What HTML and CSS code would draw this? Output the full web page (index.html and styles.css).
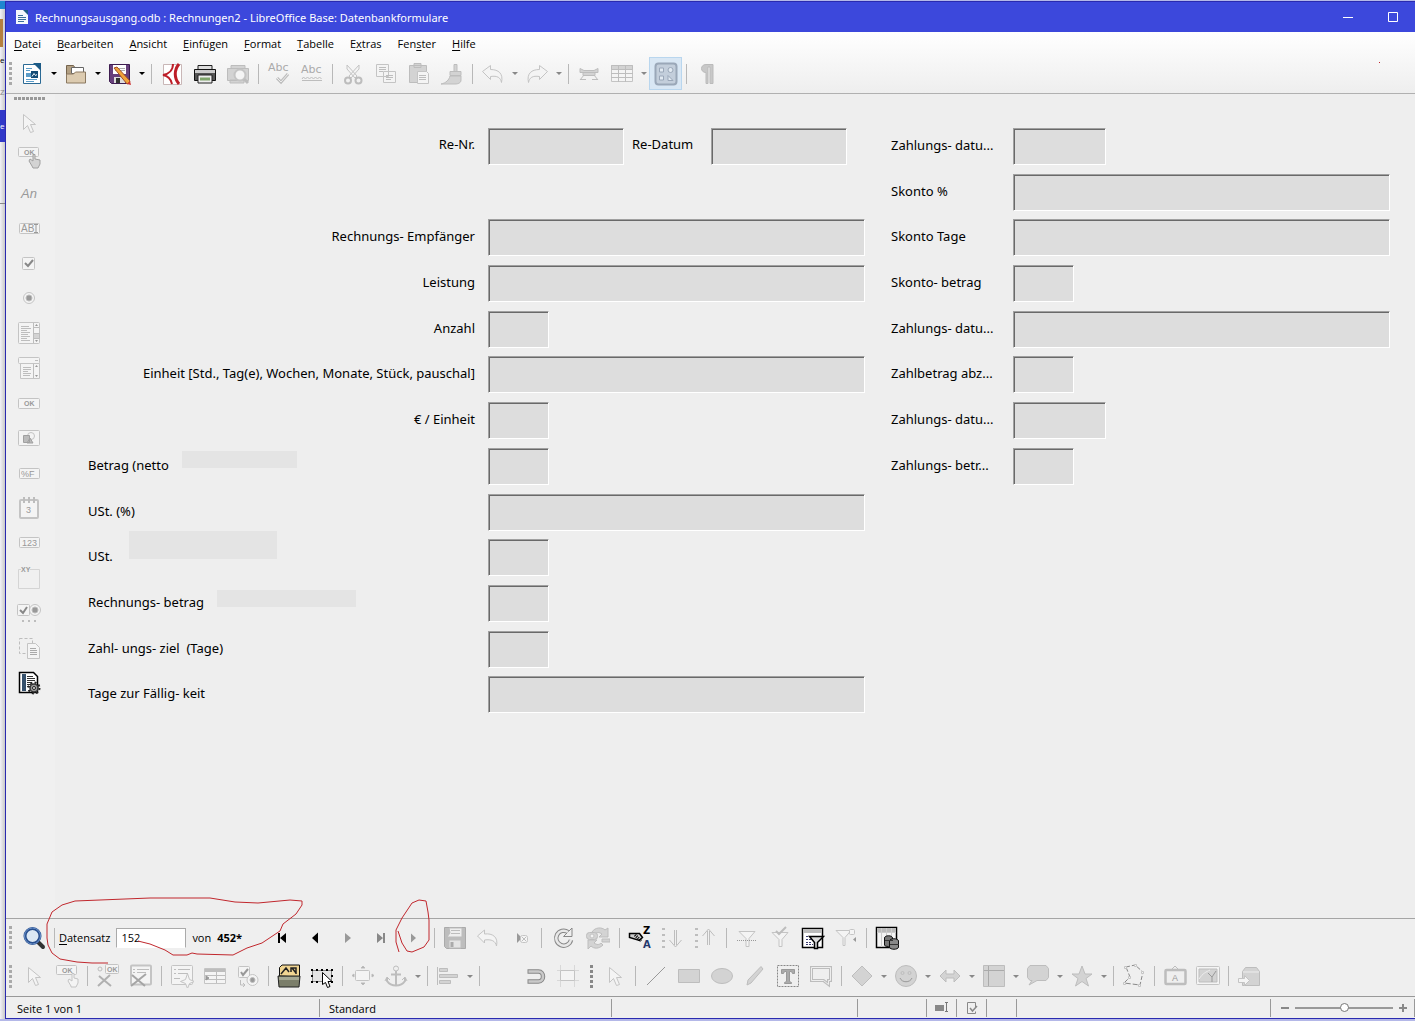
FILE: index.html
```html
<!DOCTYPE html>
<html lang="de">
<head>
  <meta charset="utf-8" />
  <meta name="viewport" content="width=device-width, initial-scale=1" />
  <title>Rechnungsausgang.odb : Rechnungen2 - LibreOffice Base: Datenbankformulare</title>
  <link rel="stylesheet" href="styles.css">
</head>
<body>
  <div class="behind" aria-hidden="true">
    <div class="b-tab"></div>
    <div class="b-folder"></div>
    <div class="b-text">e</div>
    <div class="b-text b-grey">Z</div>
    <div class="b-sel">e</div>
    <div class="b-line"></div>
  </div>

  <div class="window">
    <header class="titlebar">
      <svg class="app-icon" viewBox="0 0 14 16"><path d="M1 1h8l4 4v10H1z" fill="#f4f8fc"/><path d="M8 1h5v5z" fill="#1c5a86"/><path d="M3 6.500h5M3 8.500h8M3 10.500h8M3 12.500h6" stroke="#3b6f9b"/></svg>
      <h1>Rechnungsausgang.odb : Rechnungen2 - LibreOffice Base: Datenbankformulare</h1>
      <button class="win-btn" aria-label="Minimieren"><svg viewBox="0 0 12 12"><path d="M1 6.500h10" stroke="#fff"/></svg></button>
      <button class="win-btn" aria-label="Maximieren"><svg viewBox="0 0 12 12"><path d="M1.500 1.500h9v9h-9z" fill="none" stroke="#fff"/></svg></button>
    </header>

    <div class="top">
      <nav class="menubar">
        <button><u>D</u>atei</button>
        <button><u>B</u>earbeiten</button>
        <button><u>A</u>nsicht</button>
        <button><u>E</u>infügen</button>
        <button><u>F</u>ormat</button>
        <button><u>T</u>abelle</button>
        <button>E<u>x</u>tras</button>
        <button>Fen<u>s</u>ter</button>
        <button><u>H</u>ilfe</button>
      </nav>

      <div class="toolbar standard">
        <span class="grip"></span>
        <button class="tb" aria-label="Neu"><svg viewBox="0 0 24 24"><path d="M3.500 2.500h12l5 5v14h-17z" fill="#fff" stroke="#2b6a95"/><path d="M13 1h8v8z" fill="#1d5b86"/><path d="M6 6.500h6M6 8.500h4M6 17.500h11M6 19.500h8" stroke="#5b9cc8"/><path d="M6 11h5v4H6z" fill="#5b9cc8"/><path d="M11 9h7v7h-7z" fill="#144b74"/><path d="M12 14.500l2-3 1.500 2 1.500-1" stroke="#fff" fill="none"/></svg></button>
        <button class="drop" aria-label="Neu Auswahl"></button>
        <button class="tb" aria-label="Öffnen"><svg viewBox="0 0 24 24"><path d="M2.500 19.500v-16h7l2 3h8v13z" fill="#b3a083" stroke="#75644d"/><path d="M7.500 5.500h12v6h-12z" fill="#fff" stroke="#666"/><path d="M2.500 21v-9h7l2-2h10v11z" fill="#dccbb0" stroke="#8b7961"/></svg></button>
        <button class="drop" aria-label="Öffnen Auswahl"></button>
        <button class="tb" aria-label="Speichern"><svg viewBox="0 0 24 24"><path d="M1.500 2.500h20v19h-18l-2-2z" fill="#67407c" stroke="#3e1d50"/><path d="M5 3h13v9H5z" fill="#fff"/><path d="M7 6.500h10M7 8.500h10" stroke="#aaa"/><path d="M6 15h11v6H6z" fill="#ddd"/><path d="M8 16h4v5H8z" fill="#333"/><path d="M6 6l3-1 13 14-1 2-2 1z" fill="#f0a339" stroke="#a3502a"/><path d="M19 22l4 1-1-4z" fill="#c33"/></svg></button>
        <button class="drop" aria-label="Speichern Auswahl"></button>
        <span class="sep"></span>
        <button class="tb" aria-label="Als PDF exportieren"><svg viewBox="0 0 24 24"><path d="M3.500 2.500h18v20h-18z" fill="#fff" stroke="#c9b7b7"/><path d="M19 2c-5 6-5 14 0 20" stroke="#bd1e28" stroke-width="3" fill="none"/><path d="M13 2c0 6-4 10-10 11 5 1 8 4 9 9" stroke="#bd1e28" stroke-width="2" fill="none"/></svg></button>
        <button class="tb" aria-label="Drucken"><svg viewBox="0 0 24 24"><path d="M5 3.500h14v5H5z" fill="#ddd" stroke="#222"/><path d="M1.500 7.500h21v11h-21z" fill="#555" stroke="#111"/><path d="M2 8h20v3H2z" fill="#ccc"/><path d="M5 13h14v8H5z" fill="#eee" stroke="#222"/><path d="M7 17h10" stroke="#7fa56b" stroke-width="3"/></svg></button>
        <button class="tb" aria-label="Druckvorschau" disabled><svg class="off" viewBox="0 0 24 24"><path class="f" d="M1.500 6.500h21v12h-21zM5 3.500h14v3H5zM4 18h14v3H4z"/><circle class="l" cx="14" cy="13" r="5.500" stroke-width="2"/><path d="M18 17l4 4" stroke-width="3"/></svg></button>
        <span class="sep"></span>
        <button class="tb" aria-label="Rechtschreibung" disabled><svg class="off" viewBox="0 0 24 24"><text x="1" y="9" class="abc">Abc</text><path d="M10 16l4 4 7-8" stroke-width="3"/><path d="M10 16l4 4 7-8" stroke="#eee"/></svg></button>
        <button class="tb" aria-label="Automatische Rechtschreibung" disabled><svg class="off" viewBox="0 0 24 24"><text x="1" y="11" class="abc">Abc</text><path d="M2 17l1.500-2 2 2 2-2 2 2 2-2 2 2 2-2 2 2 2-2 2 2"/><path d="M2 18.500h20"/></svg></button>
        <span class="sep"></span>
        <button class="tb" aria-label="Ausschneiden" disabled><svg class="off" viewBox="0 0 24 24"><path class="l" d="M6 3v4l8 9 2-2zM18 3v4l-8 9-2-2z"/><circle cx="7" cy="18.500" r="3" stroke-width="2"/><circle cx="17.500" cy="18.500" r="3" stroke-width="2"/></svg></button>
        <button class="tb" aria-label="Kopieren" disabled><svg class="off" viewBox="0 0 24 24"><path class="l" d="M2.500 2.500h12v12h-12zM9.500 9.500h12v11h-12z"/><path d="M5 5.500h7M5 7.500h7M5 9.500h4M12 13.500h7M12 15.500h7M12 17.500h5"/></svg></button>
        <button class="tb" aria-label="Einfügen" disabled><svg class="off" viewBox="0 0 24 24"><path class="f" d="M2.500 3.500h17v17h-17zM7 1.500h7v4H7z"/><path class="l" d="M10.500 9.500h9l2 2v10h-11z"/><path d="M12 13.500h7M12 15.500h7M12 17.500h7"/></svg></button>
        <button class="tb" aria-label="Format übertragen" disabled><svg class="off" viewBox="0 0 24 24"><path class="f" d="M14 2.500h3v7h-3zM10 9.500h11v4H10zM10 14h11v4c0 3-3 4-6 4H1c5-1 8-4 9-8z"/></svg></button>
        <span class="sep"></span>
        <button class="tb" aria-label="Rückgängig" disabled><svg class="off" viewBox="0 0 24 24"><path class="l" d="M1.500 9.500l8-6v4c8 0 13 4 11 13-1-5-4-7-11-6v3z"/></svg></button>
        <button class="drop" aria-label="Rückgängig Auswahl" disabled></button>
        <button class="tb" aria-label="Wiederherstellen" disabled><svg class="off" viewBox="0 0 24 24"><path class="l" d="M22.500 9.500l-8-6v4c-8 0-13 4-11 13 1-5 4-7 11-6v3z" stroke="#b8b8b8"/></svg></button>
        <button class="drop" aria-label="Wiederherstellen Auswahl" disabled></button>
        <span class="sep"></span>
        <button class="tb" aria-label="Suchen" disabled><svg class="off" viewBox="0 0 24 24"><path class="f" d="M3 6.500l4 2h10l4-2v4H3zM6 10.500h12v3H6z"/><path d="M7 13l-4 5M17 13l4 5M3 17.500h6M15 17.500h6"/></svg></button>
        <button class="tb" aria-label="Tabelle" disabled><svg class="off" viewBox="0 0 24 24"><path class="l" d="M1.500 3.500h21v16h-21z"/><path class="f" d="M1.500 3.500h21v4h-21z"/><path d="M1 11.500h22M1 15.500h22M8.500 4v16M15.500 4v16"/></svg></button>
        <button class="drop" aria-label="Tabelle Auswahl" disabled></button>
        <button class="tb active" aria-label="Zeichenfunktionen"><svg viewBox="0 0 24 24" fill="none" stroke="#9aa7b8"><rect x="1.500" y="1.500" width="21" height="21" rx="3" fill="#c3cedb" stroke-width="2"/><path d="M5.500 6h4v4h-4zM5.500 14h4v4h-4zM14 13.500v5h5z" fill="#e1e9f1"/><circle cx="16.500" cy="8" r="2.500" fill="#e1e9f1"/></svg></button>
        <span class="sep"></span>
        <button class="tb" aria-label="Formatierungszeichen" disabled><svg class="off" viewBox="0 0 24 24"><path d="M18 2.500h-7c-6 0-6 8 0 8v11h2V5h2v16.500h3z" fill="#c8c8c8" stroke="#bbb"/></svg></button>
      </div>
      <span class="dot"></span>
    </div>

    <main class="work">
      <aside class="sidebar">
        <span class="grip-h"></span>
        <button class="sb" aria-label="Auswahl" disabled><svg class="off" viewBox="0 0 24 24"><path class="l" d="M6.500 3.500v15l4-4 3 7 3-1-3-7h5z"/></svg></button>
        <button class="sb" aria-label="Schaltfläche mit Zeiger" disabled><svg class="off" viewBox="0 0 24 24"><rect class="l" x="1.500" y="1.500" width="20" height="9" rx="1"/><text x="7" y="9" class="t7">OK</text><path class="f" d="M15 20l-3-5 1-2 3 2V8.500h2V13l5 1v4l-2 4h-5z" stroke="#a0a0a0"/></svg></button>
        <button class="sb" aria-label="Beschriftungsfeld" disabled><svg class="off" viewBox="0 0 24 24"><text x="4" y="17" class="t13 it">An</text></svg></button>
        <button class="sb" aria-label="Textfeld" disabled><svg class="off" viewBox="0 0 24 24"><rect class="l" x="2.500" y="7.500" width="20" height="10" rx="1"/><text x="4" y="16" class="t10">AB</text><path d="M17 8.500h4M19 9v8M17 16.500h4" stroke="#999"/></svg></button>
        <button class="sb" aria-label="Markierfeld" disabled><svg class="off" viewBox="0 0 24 24"><rect class="l" x="5.500" y="6.500" width="12" height="12" rx="1"/><path d="M8 12l3 3 5-6" stroke="#888" stroke-width="2"/></svg></button>
        <button class="sb" aria-label="Optionsfeld" disabled><svg class="off" viewBox="0 0 24 24"><circle class="l" cx="12" cy="12" r="5.500"/><circle cx="12" cy="12" r="3" fill="#999"/></svg></button>
        <button class="sb" aria-label="Listenfeld" disabled><svg class="off" viewBox="0 0 24 24"><rect class="l" x="1.500" y="1.500" width="21" height="21" rx="1"/><path class="f" d="M16.500 12.500h6v5h-6z"/><path d="M16.500 2v20M17 6.500h5M4 5.500h8M4 7.500h10M4 9.500h6M4 11.500h9M4 13.500h7M4 15.500h9M4 17.500h6M4 19.500h9"/><path d="M18 5l1.500-2L21 5zM18 19l1.500 2 1.500-2z" fill="#999" stroke="none"/></svg></button>
        <button class="sb" aria-label="Kombinationsfeld" disabled><svg class="off" viewBox="0 0 24 24"><rect class="l" x="1.500" y="1.500" width="21" height="6" rx="1"/><path class="l" d="M3.500 7.500h19v15h-19z"/><path d="M16.500 8v14M6 11.500h8M6 13.500h8M6 15.500h5M6 17.500h8M6 19.500h7M18 4.500h3"/><path d="M18 11l1.500-2 1.500 2zM18 19l1.500 2 1.500-2z" fill="#999" stroke="none"/></svg></button>
        <button class="sb" aria-label="Schaltfläche" disabled><svg class="off" viewBox="0 0 24 24"><rect class="l" x="1.500" y="7.500" width="21" height="10" rx="1"/><text x="7" y="15" class="t7">OK</text></svg></button>
        <button class="sb" aria-label="Grafische Schaltfläche" disabled><svg class="off" viewBox="0 0 24 24"><rect class="l" x="1.500" y="4.500" width="21" height="15" rx="1"/><circle class="l" cx="14" cy="10" r="3.500" stroke="#a0a0a0"/><path d="M6.500 9.500h6v7h-6zM10 17l3-5 3 5z" fill="#bbb" stroke="#a0a0a0"/></svg></button>
        <button class="sb" aria-label="Formatiertes Feld" disabled><svg class="off" viewBox="0 0 24 24"><rect class="l" x="2.500" y="7.500" width="20" height="10" rx="1"/><text x="4" y="16" class="t9">%F</text></svg></button>
        <button class="sb" aria-label="Datumsfeld" disabled><svg class="off" viewBox="0 0 24 24"><rect class="l" x="3" y="4" width="18" height="18" rx="1" stroke-width="2"/><path d="M7 1v6M12 1v6M17 1v6" stroke-width="2"/><text x="9" y="17" class="t9">3</text></svg></button>
        <button class="sb" aria-label="Numerisches Feld" disabled><svg class="off" viewBox="0 0 24 24"><rect class="l" x="2.500" y="6.500" width="20" height="10" rx="1"/><text x="5" y="15" class="t9">123</text></svg></button>
        <button class="sb" aria-label="Gruppierungsrahmen" disabled><svg class="off" viewBox="0 0 24 24"><path d="M4 3.500H1.500v19h21v-19H13" stroke="#d4d4d4"/><text x="4" y="6" class="t7">XY</text></svg></button>
        <button class="sb" aria-label="Weitere Steuerelemente" disabled><svg class="off" viewBox="0 0 24 24"><rect class="l" x="0.500" y="3.500" width="12" height="11" rx="1"/><path d="M3 9l3 3 4-6" stroke="#888" stroke-width="2"/><circle class="l" cx="18" cy="9" r="5.500"/><circle cx="18" cy="9" r="3" fill="#999"/><path d="M5 20h2M11 20h2M17 20h2" stroke-width="2"/></svg></button>
        <button class="sb" aria-label="Formular-Entwurf" disabled><svg class="off" viewBox="0 0 24 24"><path d="M2.500 2.500h13v15h-13z" stroke-dasharray="3 2"/><path class="l" d="M10.500 7.500h8l4 4v11h-12z" stroke="#aaa"/><path d="M13 12.500h6M13 14.500h7M13 16.500h7M13 18.500h7" stroke="#aaa"/></svg></button>
        <button class="sb" aria-label="Assistenten"><svg viewBox="0 0 24 24"><path d="M2.500 1.500h14l4 4v16h-18z" fill="#fff" stroke="#000" stroke-width="1.500"/><path d="M7 3v17" stroke="#35506b" stroke-width="4"/><path d="M10 5.500h6M10 7.500h8M10 9.500h8M10 11.500h5M10 13.500h4M10 15.500h3" stroke="#333"/><circle cx="17" cy="17" r="5.500" fill="none" stroke="#222" stroke-width="2" stroke-dasharray="2 2.300"/><circle cx="17" cy="17" r="4" fill="#999" stroke="#333" stroke-width="1.500"/><circle cx="17" cy="17" r="1.500" fill="#eee" stroke="#222"/></svg></button>
      </aside>

      <form class="form">
        <div class="col left">
          <div class="row head">
            <label class="lab r" for="renr">Re-Nr.</label><input class="fld md" id="renr" disabled>
            <label class="mid" for="redatum">Re-Datum</label><input class="fld md" id="redatum" disabled>
          </div>
          <div class="row"></div>
          <div class="row"><label class="lab r" for="empf">Rechnungs- Empfänger</label><input class="fld" id="empf" disabled></div>
          <div class="row"><label class="lab r" for="leist">Leistung</label><input class="fld" id="leist" disabled></div>
          <div class="row"><label class="lab r" for="anz">Anzahl</label><input class="fld xs" id="anz" disabled></div>
          <div class="row"><label class="lab r" for="einh">Einheit [Std., Tag(e), Wochen, Monate, Stück, pauschal]</label><input class="fld" id="einh" disabled></div>
          <div class="row"><label class="lab r" for="proe">€ / Einheit</label><input class="fld xs" id="proe" disabled></div>
          <div class="row"><label class="lab" for="netto">Betrag (netto <span class="patch p1"></span></label><input class="fld xs" id="netto" disabled></div>
          <div class="row"><label class="lab" for="ustp">USt. (%)</label><input class="fld" id="ustp" disabled></div>
          <div class="row"><label class="lab" for="ust">USt. <span class="patch p2"></span></label><input class="fld xs" id="ust" disabled></div>
          <div class="row"><label class="lab" for="rebetrag">Rechnungs- betrag <span class="patch p3"></span></label><input class="fld xs" id="rebetrag" disabled></div>
          <div class="row"><label class="lab" for="ziel">Zahl- ungs- ziel&nbsp; (Tage)</label><input class="fld xs" id="ziel" disabled></div>
          <div class="row"><label class="lab" for="faellig">Tage zur Fällig- keit</label><input class="fld" id="faellig" disabled></div>
        </div>
        <div class="col right">
          <div class="row"><label class="lab" for="zd1">Zahlungs- datu...</label><input class="fld sm" id="zd1" disabled></div>
          <div class="row"><label class="lab" for="skp">Skonto %</label><input class="fld" id="skp" disabled></div>
          <div class="row"><label class="lab" for="skt">Skonto Tage</label><input class="fld" id="skt" disabled></div>
          <div class="row"><label class="lab" for="skb">Skonto- betrag</label><input class="fld xs" id="skb" disabled></div>
          <div class="row"><label class="lab" for="zd2">Zahlungs- datu...</label><input class="fld" id="zd2" disabled></div>
          <div class="row"><label class="lab" for="zabz">Zahlbetrag abz...</label><input class="fld xs" id="zabz" disabled></div>
          <div class="row"><label class="lab" for="zd3">Zahlungs- datu...</label><input class="fld sm" id="zd3" disabled></div>
          <div class="row"><label class="lab" for="zb">Zahlungs- betr...</label><input class="fld xs" id="zb" disabled></div>
        </div>
      </form>
    </main>

    <div class="bottom">
      <div class="toolbar nav">
        <span class="grip"></span>
        <div class="record">
          <button class="tb" aria-label="Datensatz suchen"><svg viewBox="0 0 24 24"><path d="M16 16l5 5" stroke="#333" stroke-width="4" stroke-linecap="round"/><circle cx="10.500" cy="10" r="7.500" fill="#dbe7f3" stroke="#284f8f" stroke-width="3"/><circle cx="10.500" cy="10" r="8" fill="none" stroke="#6d93c9"/></svg></button>
          <span class="sep"></span>
          <label for="rec"><u>D</u>atensatz</label>
          <input id="rec" class="rec" value="152">
          <span class="von">von</span>
          <b>452*</b>
        </div>
        <button class="tb" aria-label="Erster Datensatz"><svg viewBox="0 0 24 24"><path d="M8 7h2v10H8zM16 7v10l-6-5z"/></svg></button>
        <button class="tb" aria-label="Vorheriger Datensatz"><svg viewBox="0 0 24 24"><path d="M15 6.500v11L9 12z"/></svg></button>
        <button class="tb" aria-label="Nächster Datensatz" disabled><svg viewBox="0 0 24 24" fill="#999"><path d="M9 7v10l6-5z"/></svg></button>
        <button class="tb" aria-label="Letzter Datensatz" disabled><svg viewBox="0 0 24 24" fill="#888"><path d="M8 7v10l6-5zM14 7h2v10h-2z"/></svg></button>
        <button class="tb" aria-label="Neuer Datensatz" disabled><svg viewBox="0 0 24 24" fill="#999"><path d="M9 7.500v9l5-4.500z"/></svg></button>
        <span class="sep"></span>
        <button class="tb" aria-label="Datensatz speichern" disabled><svg class="off" viewBox="0 0 24 24"><path d="M1.500 1.500h21v21h-19l-2-2z" fill="#bdbdbd" stroke="#aaa"/><path d="M6 2h13v9H4l3-4z" fill="#eee"/><path d="M8 4.500h9M8 7.500h9"/><path d="M6 14h12v8H6z" fill="#e4e4e4"/><path d="M9 16v5" stroke="#aaa" stroke-width="3"/></svg></button>
        <button class="tb" aria-label="Eingabe zurücksetzen" disabled><svg class="off" viewBox="0 0 24 24"><path class="l" d="M1.500 10l7-6v4c8-1 14 3 12 12-1-5-5-7-12-6v3z"/></svg></button>
        <button class="tb" aria-label="Datensatz löschen" disabled><svg class="off" viewBox="0 0 24 24"><path d="M8 7v10l5-5z" fill="#999" stroke="none"/><rect class="l" x="11.500" y="9.500" width="7" height="7" rx="2"/><path d="M13 11l4 4M17 11l-4 4"/></svg></button>
        <span class="sep"></span>
        <button class="tb wide" aria-label="Aktualisieren"><svg viewBox="0 0 24 24" fill="none"><path d="M17 6a7.500 7.500 0 1 0 3 8" stroke="#888" stroke-width="4.500"/><path d="M12.500 10.500h8.500V2z" fill="#eee" stroke="#888"/><path d="M17 6a7.500 7.500 0 1 0 3 8" stroke="#e8e8e8" stroke-width="2.500"/></svg></button>
        <button class="tb wide" aria-label="Steuerelement aktualisieren" disabled><svg class="off" viewBox="0 0 24 24"><path class="f" d="M6 6c3-5 10-5 13-2l3-2v9h-9l3-3c-3-2-5-2-7 0zM17 19c-4 4-9 4-12 1l-3 3v-9h9l-3 3c3 2 5 2 7 0zM16 13h8v3h-8z"/><rect class="f" x="0.500" y="6.500" width="11" height="7" rx="3"/><circle class="l" cx="6" cy="10" r="2"/></svg></button>
        <span class="sep"></span>
        <button class="tb" aria-label="Sortieren"><svg viewBox="0 0 24 24"><path d="M1.500 7.500h10l3 4-3 3-10-3z" fill="#ccc" stroke="#000" stroke-width="1.500"/><path d="M7 9l6 6" stroke="#000" stroke-width="3" stroke-dasharray="1 1"/><text x="15" y="8" class="za">Z</text><text x="15" y="22" class="za blue">A</text></svg></button>
        <button class="tb" aria-label="Aufsteigend" disabled><svg class="off" viewBox="0 0 24 24"><path d="M2.500 2v20" stroke-width="3" stroke-dasharray="2 4"/><path d="M13.500 4v15M15.500 4v15M8.500 14l6 7 6-7"/></svg></button>
        <button class="tb" aria-label="Absteigend" disabled><svg class="off" viewBox="0 0 24 24"><path d="M2.500 2v20" stroke-width="3" stroke-dasharray="2 4"/><path d="M13.500 5v14M15.500 5v14M8.500 10l6-7 6 7"/></svg></button>
        <span class="sep"></span>
        <button class="tb" aria-label="AutoFilter" disabled><svg class="off" viewBox="0 0 24 24"><path class="l" d="M4 5.500h16l-6 7v8h-3v-8z" stroke="#b0b0b0"/><path d="M2 14.500h20" stroke="#999" stroke-dasharray="1 1"/></svg></button>
        <button class="tb" aria-label="Filter anwenden" disabled><svg class="off" viewBox="0 0 24 24"><path class="l" d="M4 6.500h16l-6 7v7h-3v-7z" stroke="#b0b0b0"/><path d="M8 5l3 3 7-7" stroke-width="2"/></svg></button>
        <button class="tb" aria-label="Formularbasierte Filter"><svg viewBox="0 0 24 24"><path d="M1.500 2.500h20v19h-20z" fill="#fff" stroke="#000" stroke-width="1.500"/><path d="M2 3h19v4H2z" fill="#bbb"/><path d="M5 10.500h13M5 13.500h5M5 16.500h6M5 18.500h7" stroke="#3c3c70" stroke-dasharray="2 1"/><path d="M8.500 10.500h14l-6 6v6h-3v-6z" fill="#ddd" stroke="#000" stroke-width="1.500"/></svg></button>
        <button class="tb" aria-label="Filter entfernen" disabled><svg class="off" viewBox="0 0 24 24"><path class="l" d="M2 4.500h15l-6 7v8H9v-8z" stroke="#999"/><rect class="l" x="15.500" y="3.500" width="5" height="5" rx="1"/><path d="M22 11v5l-3-2.500z" fill="#999" stroke="none"/></svg></button>
        <span class="sep"></span>
        <button class="tb" aria-label="Datenquelle als Tabelle"><svg viewBox="0 0 24 24"><path d="M1.500 1.500h20v20h-20z" fill="#f4f4f4" stroke="#000" stroke-width="1.500"/><path d="M2 2h19v4H2z" fill="#bbb"/><path d="M6.500 2v19M11.500 2v19M16.500 2v19M2 6.500h19" stroke="#ccc"/><path d="M9.500 12c0-3 8-3 8 0v7c0 2-8 2-8 0z" fill="#777" stroke="#111"/><path d="M14.500 15c0-3 9-3 9 0v6c0 3-9 3-9 0z" fill="#888" stroke="#111"/><path d="M10 14.500h8M15 18.500h9" stroke="#333"/></svg></button>
      </div>

      <div class="toolbar design">
        <span class="grip wide-grip"></span>
        <button class="tb" aria-label="Auswahl" disabled><svg class="off" viewBox="0 0 24 24"><path class="l" d="M6.500 3.500v15l4-4 3 7 3-1-3-7h5z"/></svg></button>
        <button class="tb" aria-label="Entwurfsmodus" disabled><svg class="off" viewBox="0 0 24 24"><rect class="l" x="1.500" y="1.500" width="20" height="9" rx="1"/><text x="7" y="9" class="t7">OK</text><path class="l" d="M16 22l-3-5 1-2 3 2V9.500h2V14l4 1v4l-2 4h-5z" stroke="#a0a0a0"/></svg></button>
        <span class="sep"></span>
        <button class="tb" aria-label="Steuerelement" disabled><svg class="off" viewBox="0 0 24 24"><circle cx="4" cy="5" r="2"/><rect class="l" x="9.500" y="0.500" width="13" height="9" rx="1"/><text x="11" y="8" class="t7">OK</text><path d="M3 12l12 10M14 11L2 22" stroke="#b0b0b0" stroke-width="2"/></svg></button>
        <button class="tb" aria-label="Formular" disabled><svg class="off" viewBox="0 0 24 24"><rect class="l" x="2" y="1.500" width="20" height="19" rx="1" stroke-width="2"/><path d="M8 5.500h12M8 8.500h9M4 5.500h2M4 8.500h2"/><path d="M3 11l13 11M17 10L2 22" stroke="#a5a5a5" stroke-width="2"/></svg></button>
        <span class="sep"></span>
        <button class="tb" aria-label="Formular-Navigator" disabled><svg class="off" viewBox="0 0 24 24"><rect class="l" x="1.500" y="1.500" width="21" height="19" rx="1"/><path d="M8 5.500h12M8 9.500h10M4 5.500h2M4 9.500h2M4 14.500h6"/><path class="l" d="M17.500 9.500l2 6 5 2-5 2-2 5-2-5-5-2 5-2z" stroke="#999"/></svg></button>
        <button class="tb" aria-label="Feld hinzufügen" disabled><svg class="off" viewBox="0 0 24 24"><path class="l" d="M1.500 4.500h21v15h-21z"/><path d="M2 6.500h20" stroke-width="3"/><path d="M2 11.500h20M2 15.500h20M13.500 8v11"/><path d="M3 12v4l3-2z" fill="#999" stroke="#999"/></svg></button>
        <button class="tb" aria-label="Aktivierungsreihenfolge" disabled><svg class="off" viewBox="0 0 24 24"><rect class="l" x="2.500" y="2.500" width="11" height="11" rx="1"/><path d="M5 8l2 3 5-6" stroke="#999" stroke-width="2"/><circle class="l" cx="16.500" cy="16" r="5.500"/><circle cx="16.500" cy="16" r="2.500" fill="#999"/><path d="M4.500 16v5h4M7 19l2 2-2 2"/></svg></button>
        <span class="sep"></span>
        <button class="tb" aria-label="Im Entwurfsmodus öffnen"><svg viewBox="0 0 24 24"><path d="M2.500 12V3.500L5 1h17.500v12z" fill="#f1d592" stroke="#111"/><path d="M4 10l5-6 3 4M14 8V4h5v6M15 4l4 5" stroke="#222" stroke-width="1.500" fill="none"/><path d="M1 12h22l-1 11H2z" fill="#7b7e6a" stroke="#222"/><path d="M2 13h20v3H2z" fill="#a5a893"/></svg></button>
        <button class="tb" aria-label="Automatischer Steuerelement-Fokus"><svg viewBox="0 0 24 24"><path d="M2.500 6.500h19v11h-19z" fill="#e4e4e4" stroke="#888"/><path d="M1 5h2v2H1zM6 5h2v2H6zM11 5h2v2h-2zM16 5h2v2h-2zM21 5h2v2h-2zM1 11h2v2H1zM21 11h2v2h-2zM1 17h2v2H1zM6 17h2v2H6zM21 17h2v2h-2z"/><path d="M12.500 8.500v12l3-2 2 5 2.500-1-2-5h4z" fill="#fff" stroke="#000"/></svg></button>
        <span class="sep"></span>
        <button class="tb" aria-label="Position und Größe" disabled><svg class="off" viewBox="0 0 24 24"><rect class="l" x="4.500" y="6.500" width="14" height="10" rx="1"/><path d="M10 4l2-2 2 2zM10 19l2 2 2-2zM3 10l-2 1.500L3 13zM21 10l2 1.500-2 1.500z" fill="#aaa"/></svg></button>
        <button class="tb" aria-label="Verankerung" disabled><svg class="off" viewBox="0 0 24 24"><circle cx="12" cy="4.500" r="2.500"/><path d="M12 7v14M7 10.500h10M3 14v3c4 6 14 6 18 0v-3" stroke-width="2"/><path d="M1 17l2-4 3 3M23 17l-2-4-3 3"/></svg></button>
        <button class="drop" aria-label="Verankerung Auswahl" disabled></button>
        <span class="sep"></span>
        <button class="tb" aria-label="Ausrichtung" disabled><svg class="off" viewBox="0 0 24 24"><path d="M1.500 3v18"/><path class="f" d="M3.500 4.500h8v3h-8zM3.500 10.500h18v3h-18zM3.500 16.500h11v3h-11z"/></svg></button>
        <button class="drop" aria-label="Ausrichtung Auswahl" disabled></button>
        <span class="sep"></span>
        <button class="tb wide" aria-label="Raster anzeigen" disabled></button>
        <button class="tb" aria-label="Am Raster fangen" disabled><svg class="off" viewBox="0 0 24 24"><path d="M4.500 7.500h11c6 0 6 10 0 10h-11" stroke="#888" stroke-width="4.500"/><path d="M5.500 7.500h10c6 0 6 10 0 10h-10" stroke="#c9c9c9" stroke-width="2.500"/></svg></button>
        <button class="tb" aria-label="Hilfslinien" disabled><svg class="off" viewBox="0 0 24 24"><path d="M4.500 1v22M18.500 1v22M1 6.500h22M1 16.500h22" stroke="#d8d8d8"/><path class="l" d="M4.500 6.500h14v10h-14z" stroke="#aaa"/></svg></button>
        <span class="grip second"></span>
        <button class="tb" aria-label="Objekt auswählen" disabled><svg class="off" viewBox="0 0 24 24"><path class="l" d="M6.500 3.500v15l4-4 3 7 3-1-3-7h5z" stroke="#aaa"/></svg></button>
        <span class="sep"></span>
        <button class="tb" aria-label="Linie" disabled><svg class="off" viewBox="0 0 24 24"><path d="M3 21L21 3" stroke="#999"/></svg></button>
        <button class="tb" aria-label="Rechteck" disabled><svg class="off" viewBox="0 0 24 24"><path class="f" d="M1.500 5.500h21v13h-21z"/></svg></button>
        <button class="tb" aria-label="Ellipse" disabled><svg class="off" viewBox="0 0 24 24"><ellipse class="f" cx="12" cy="12" rx="10.500" ry="7.500"/></svg></button>
        <button class="tb" aria-label="Freihandlinie" disabled><svg class="off" viewBox="0 0 24 24"><path class="f" d="M18 2.500l2 2.500L8 19l-4 2 1-5z"/></svg></button>
        <button class="tb" aria-label="Textfeld" disabled><svg class="off" viewBox="0 0 24 24"><path d="M1.500 1.500h21v21h-21z" stroke="#888" stroke-dasharray="2 1"/><path d="M5.500 5.500h13v4h-2l-1-2h-2v10l2 1v1h-7v-1l2-1v-10h-2l-1 2h-2z" fill="#aaa" stroke="#999"/></svg></button>
        <button class="tb" aria-label="Legende" disabled><svg class="off" viewBox="0 0 24 24"><path d="M2.500 3.500h19v13h-2v4l-5-4h-12z" stroke-width="3"/><path d="M2.500 3.500h19v13h-2v4l-5-4h-12z" stroke="#eee"/></svg></button>
        <span class="sep"></span>
        <button class="tb" aria-label="Standardformen" disabled><svg class="off" viewBox="0 0 24 24"><path class="f" d="M12 2l10 10-10 10L2 12z"/></svg></button>
        <button class="drop" aria-label="Standardformen Auswahl" disabled></button>
        <button class="tb" aria-label="Symbolformen" disabled><svg class="off" viewBox="0 0 24 24"><circle class="f" cx="12" cy="12" r="10.500"/><circle cx="8.500" cy="9" r="1.500"/><circle cx="15.500" cy="9" r="1.500"/><path d="M6 14c2 5 10 5 12 0" stroke="#999"/></svg></button>
        <button class="drop" aria-label="Symbolformen Auswahl" disabled></button>
        <button class="tb" aria-label="Blockpfeile" disabled><svg class="off" viewBox="0 0 24 24"><path class="f" d="M2 12l6-6v4h8V6l6 6-6 6v-4H8v4z"/></svg></button>
        <button class="drop" aria-label="Blockpfeile Auswahl" disabled></button>
        <button class="tb" aria-label="Flussdiagramme" disabled><svg class="off" viewBox="0 0 24 24"><path class="f" d="M1.500 1.500h21v21h-21z"/><path d="M2 6.500h20M6.500 2v20" stroke="#aaa"/></svg></button>
        <button class="drop" aria-label="Flussdiagramme Auswahl" disabled></button>
        <button class="tb" aria-label="Legenden" disabled><svg class="off" viewBox="0 0 24 24"><path class="f" d="M4 1.500h16l2.500 3v9l-2.500 3h-9L3 21l3-4.500H4l-2.500-3v-9z"/></svg></button>
        <button class="drop" aria-label="Legenden Auswahl" disabled></button>
        <button class="tb" aria-label="Sterne" disabled><svg class="off" viewBox="0 0 24 24"><path class="f" d="M12 2l3 8h7l-6 4.500 2.500 7.500-6.500-4.500L5.500 22 8 14.500 2 10h7z"/></svg></button>
        <button class="drop" aria-label="Sterne Auswahl" disabled></button>
        <span class="sep"></span>
        <button class="tb" aria-label="Punkte" disabled><svg class="off" viewBox="0 0 24 24"><path d="M4 3l9-2 8 7-3 13" stroke="#888" stroke-dasharray="4 2"/><path d="M4 3l4 10-6 6 16 2" stroke="#888" stroke-dasharray="5 2"/><path class="l" d="M2.500 2.500h2v2h-2zM12.500 0.500h2v2h-2zM19.500 7.500h2v2h-2zM6.500 12.500h2v2h-2zM1.500 18.500h2v2h-2zM16.500 20.500h2v2h-2z" stroke="#888"/></svg></button>
        <span class="sep"></span>
        <button class="tb" aria-label="Fontwork" disabled><svg class="off" viewBox="0 0 24 24"><path d="M8 6l4-4 4 4"/><rect x="2.500" y="6" width="20" height="14" rx="1" stroke-width="2.500"/><text x="9" y="17" class="t9">A</text></svg></button>
        <button class="tb" aria-label="Bild einfügen" disabled><svg class="off" viewBox="0 0 24 24"><rect class="l" x="0.500" y="2.500" width="23" height="18" rx="1"/><path class="f" d="M3 5h18v13H3z"/><path d="M3 15c4-6 7-7 11-9" stroke="#eee"/><path d="M16 18v-5l-4-4M16 13l4-6" stroke="#999"/></svg></button>
        <span class="sep"></span>
        <button class="tb" aria-label="Extrusion" disabled><svg class="off" viewBox="0 0 24 24"><path class="f" d="M5.500 7.500l3-4h11l3 4v14h-17z"/><path d="M6 8h16" stroke="#eee"/><path class="l" d="M1.500 14.500h6v-3l5 5-5 5v-3h-6z"/></svg></button>
      </div>

      <svg class="ink" viewBox="46 899 400 70" aria-hidden="true">
        <path d="M108 963H92L77 962L60 959L52 953L48 945L47 938V924L52 912L62 905L75 901L100 900L150 898L210 898L235 902L258 903L290 900L302 901L302 905L296 914L283 924L280 931L262 943L247 948L233 955L197 954L192 953L187 955H173L165 950L150 944L138 941"/>
        <path d="M399 952L396 942V930L402 918L412 903L419 900L426 901L428 912L429 920V940L424 947L412 952L407 951L402 943L398 931"/>
      </svg>
    </div>

    <footer class="status">
      <span class="seg page">Seite 1 von 1</span>
      <span class="seg style">Standard</span>
      <span class="seg lang"></span>
      <span class="seg ins"></span>
      <span class="seg ico"><svg viewBox="0 0 16 16"><path d="M1 5h9v6H1z" fill="#888"/><path d="M11 2.500h3M12.500 3v9M11 11.500h3" stroke="#777"/></svg></span>
      <span class="seg ico"><svg viewBox="0 0 16 16" fill="none" stroke="#888"><path d="M11.500 7V2.500h-8v11h8v-2"/><path d="M6 8l2.500 3L13 6" stroke-width="1.500"/></svg></span>
      <span class="seg ico"></span>
      <span class="seg rest"></span>
      <span class="seg zoom">
        <button aria-label="Verkleinern"><svg viewBox="0 0 10 10"><path d="M1 5h8" stroke="#888" stroke-width="2"/></svg></button>
        <input type="range" aria-label="Maßstab" min="0" max="100" value="51">
        <button aria-label="Vergrößern"><svg viewBox="0 0 10 10"><path d="M1 5h8M5 1v8" stroke="#888" stroke-width="2"/></svg></button>
      </span>
    </footer>
  </div>
</body>
</html>
```
FILE: styles.css
```css
:root{
  --title: #3c48dc;
  --frame: #2a2ab0;
  --face: #efefef;
  --line: #a5a5a5;
  --field: #dddddd;
  --ink: #c1272d;
}
*{ box-sizing: border-box; }
body{
  margin: 0; height: 100vh; display: flex; overflow: hidden;
  padding: 1px 0 2px; background: #b4b8e8;
  font-family: "Open Sans", "Noto Sans", sans-serif; font-size: 11px; color: #000;
}
button{ appearance: none; border: 0; background: none; padding: 0; margin: 0; font: inherit; color: inherit; }
svg{ display: block; }

/* sliver of the window underneath */
.behind{
  width: 5px; flex: none; overflow: hidden; display: flex; flex-direction: column; font-size: 8px;
  background: linear-gradient(90deg, #f2f2f8, #c9c9c9);
}
.b-tab{ height: 8px; background: #1e86cf; }
.b-folder{ height: 28px; width: 3px; margin: 10px 0 4px; background: #b5803f; flex: none; }
.b-text{ height: 17px; margin-bottom: 15px; line-height: 17px; flex: none; }
.b-grey{ color: #888; margin-bottom: 10px; }
.b-sel{ height: 32px; line-height: 32px; background: #3038c8; color: #fff; flex: none; }
.b-line{ height: 1px; margin-top: 61px; background: #888; }

.window{
  flex: 1; min-width: 0; display: flex; flex-direction: column;
  border: 1px solid var(--frame); border-right: 0; background: var(--face);
}

.titlebar{ display: flex; align-items: center; height: 30px; padding-left: 9px; background: var(--title); color: #fff; }
.app-icon{ width: 14px; height: 16px; margin-right: 6px; }
.titlebar h1{ flex: 1; margin: 0; font-family: "Noto Sans", sans-serif; font-size: 11px; font-weight: 400; white-space: nowrap; }
.win-btn{ width: 45px; height: 30px; display: flex; align-items: center; justify-content: center; }
.win-btn svg{ width: 12px; height: 12px; }

.top{ position: relative; background: linear-gradient(#fff, #eeeeee); border-bottom: 1px solid #b0b0b0; }
.menubar{ display: flex; gap: 16px; height: 23px; padding-left: 8px; }
.menubar u, label u{ text-underline-offset: 2px; }

.toolbar{ display: flex; align-items: center; }
.standard{ height: 38px; padding-bottom: 1px; }
.nav{ height: 37px; }
.design{ height: 40px; }
.grip{
  flex: none; width: 3px; height: 23px; margin: 0 3px;
  background: repeating-linear-gradient(#aaa 0 3px, transparent 3px 5px);
}
.wide-grip{ margin-right: 5px; }
.second{ margin: 0 5px 0 6px; background: repeating-linear-gradient(#888 0 3px, transparent 3px 5px); }
.sep{ flex: none; width: 8px; height: 20px; background: linear-gradient(#b8b8b8, #b8b8b8) center / 1px 100% no-repeat; }
.tb{ flex: none; width: 33px; height: 33px; display: flex; align-items: center; justify-content: center; }
.tb.wide{ width: 35px; }
.tb svg, .sb svg{ width: 24px; height: 24px; }
.tb.active{ background: #d9e7f4; border: 1px solid #b9d6ee; }
.drop{ flex: none; width: 11px; height: 33px; display: flex; align-items: center; justify-content: center; }
.drop::after{ content: ""; border: 3px solid transparent; border-top-color: #000; border-bottom: 0; }
.drop:disabled::after{ border-top-color: #888; }

/* greyed-out icons */
.off{ fill: none; stroke: #bdbdbd; }
.off .f{ fill: #d3d3d3; }
.off .l{ fill: #f4f4f4; stroke: #c4c4c4; }
.off text{ fill: #999; stroke: none; font-family: "Liberation Sans", sans-serif; }
.off .abc{ font-family: "DejaVu Sans", sans-serif; font-size: 11px; fill: #aaa; }
.t7{ font-size: 7px; font-weight: 700; }
.t9{ font-size: 9px; }
.t10{ font-size: 10px; }
.t13{ font-size: 13px; }
.it{ font-style: italic; }
.za{ font: 700 10px "DejaVu Sans", sans-serif; }
.blue{ fill: #24386c; }

.work{ flex: 1; min-height: 0; display: flex; background: #eeeeee; }
.sidebar{ width: 49px; flex: none; padding: 3px 6px 0; background: #f0f0f0; }
.grip-h{
  display: block; width: 32px; height: 3px; margin: 0 0 5px 2px;
  background: repeating-linear-gradient(90deg, #999 0 3px, transparent 3px 4px);
}
.sb{ width: 33px; height: 35px; display: flex; align-items: center; justify-content: center; }

.form{
  flex: 1; display: flex; align-items: flex-start; gap: 26px; padding: 34px 25px 0 33px;
  font-family: "Noto Sans", sans-serif; font-size: 13px;
}
.col{ height: 594px; display: grid; grid-template-rows: repeat(13, 1fr); }
.left{ flex: 1 1 400px; }
.right{ flex: 1 1 122px; }
.row{ display: flex; align-items: flex-start; min-width: 0; }
.lab{ flex: none; display: flex; align-items: flex-start; line-height: 35px; white-space: nowrap; margin-right: 13px; }
.left .lab{ width: 387px; }
.right .lab{ width: 109px; }
.lab.r{ justify-content: flex-end; }
.mid{ width: 87px; padding-left: 8px; flex: none; }
.head .lab, .head .mid{ line-height: 32px; }
.fld{
  flex: 1; min-width: 0; height: 37px; background: var(--field);
  border: 1px solid; border-color: #a0a0a0 #fff #fff #a0a0a0; box-shadow: inset 1px 1px #696969;
}
.fld.xs{ flex: none; width: 61px; }
.fld.sm{ flex: none; width: 93px; }
.fld.md{ flex: none; width: 136px; }
.patch{ background: #e4e4e4; height: 17px; margin: 3px 0 0 13px; }
.p1{ width: 115px; }
.p2{ width: 148px; height: 28px; margin-top: -8px; margin-left: 16px; }
.p3{ width: 139px; margin-top: 5px; }

.bottom{ position: relative; border-top: 1px solid var(--line); border-bottom: 1px solid #999; }
.record{ display: flex; align-items: center; width: 250px; padding-left: 3px; white-space: nowrap; }
.record .sep{ margin-right: 1px; }
.record .tb{ width: 32px; }
.rec{
  width: 70px; height: 20px; margin: 0 6px; padding: 0 4px; font: inherit; background: #fff;
  border: 1px solid; border-color: #aaa #aaa #fff #aaa;
}
.von{ margin-right: 6px; }

/* hand-drawn marks over the record navigation */
.ink{ position: absolute; left: 40px; top: -20px; width: 400px; height: 70px; overflow: visible; pointer-events: none; fill: none; stroke: var(--ink); }
.dot{ position: absolute; top: 30px; right: 35px; width: 1px; height: 1px; background: var(--ink); }

.status{ display: flex; height: 21px; align-items: center; }
.seg{ flex: none; height: 18px; line-height: 20px; padding-left: 9px; border-right: 1px solid #999; }
.page{ width: 314px; padding-left: 11px; }
.style{ width: 292px; }
.lang{ width: 246px; }
.ins{ width: 69px; }
.ico{ width: 30px; padding-left: 7px; }
.ico svg{ width: 16px; height: 16px; margin-top: 1px; }
.rest{ flex: 1; }
.zoom{ width: 144px; display: flex; align-items: center; justify-content: space-between; padding: 0 6px 0 9px; }
.zoom button svg{ width: 10px; height: 10px; }
.zoom input{ appearance: none; width: 98px; height: 10px; margin: 0; background: linear-gradient(#999, #999) center / 100% 2px no-repeat; }
.zoom input::-webkit-slider-thumb{ appearance: none; width: 9px; height: 9px; border-radius: 50%; background: #fff; border: 1px solid #777; }
```
